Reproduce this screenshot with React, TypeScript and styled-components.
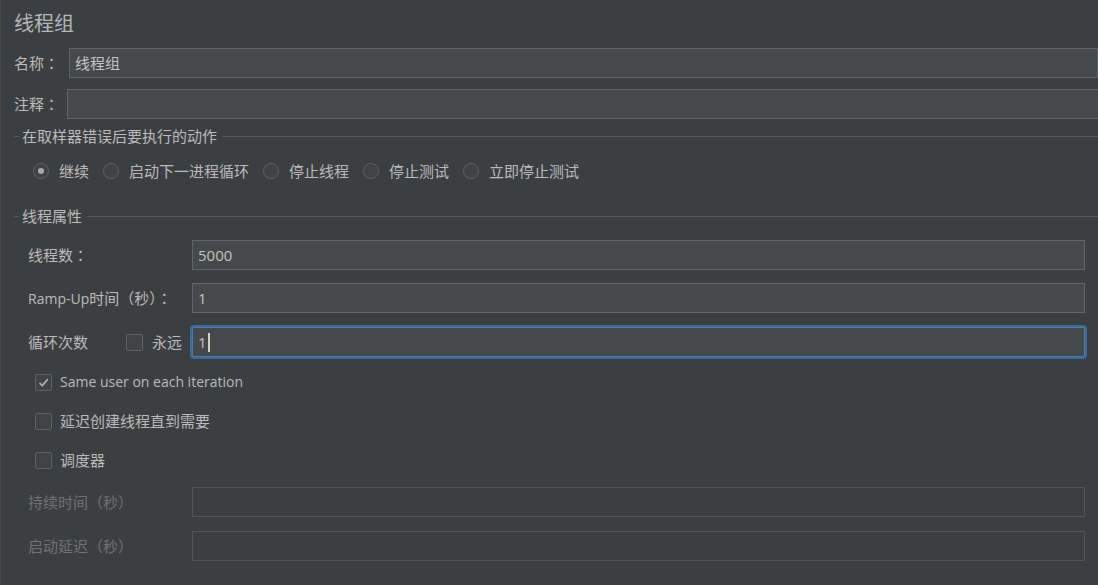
import styled, { createGlobalStyle } from 'styled-components'

const C = {
  bg: '#3c3f41',
  field: '#45494a',
  border: '#646464',
  text: '#bbbbbb',
  dim: '#6f7274',
  line: '#555859',
  off: '#525557',
  focus: '#3d6b99',
}

const GlobalStyle = createGlobalStyle`
  html, body {
    margin: 0;
    padding: 0;
    background: ${C.bg};
  }
  body {
    font-family: "Open Sans", "Noto Sans CJK SC", sans-serif;
    font-size: 15px;
    line-height: 20px;
    color: ${C.text};
  }
`

const St = {
  Panel: styled.div`
    width: 1098px;
    height: 585px;
    overflow: hidden;
    background: ${C.bg};
    box-shadow: inset 1px 0 0 #4a4d4f;
  `,
  Title: styled.div`
    height: 48px;
    display: flex;
    align-items: center;
    padding-left: 14px;
    font-size: 20px;
    color: #b4b8bb;
  `,
  TopRow: styled.div<{ top: number }>`
    display: flex;
    align-items: center;
    height: 30px;
    padding-left: 14px;
    margin-top: ${({ top }) => top}px;
  `,
  TopLabel: styled.div<{ w: number }>`
    width: ${({ w }) => w}px;
    flex: none;
    white-space: nowrap;
  `,
  // full-width colon centred in its em box, as the reference draws it
  Colon: styled.span`
    font-family: "Noto Sans CJK TC", "Noto Sans CJK SC", sans-serif;
  `,
  Latin: styled.span`
    font-size: 14px;
  `,
  Field: styled.div<{ over?: number; disabled?: boolean }>`
    flex: 1;
    height: 30px;
    box-sizing: border-box;
    display: flex;
    align-items: center;
    padding: 0 5px;
    background: ${({ disabled }) => (disabled ? 'transparent' : C.field)};
    border: 1px solid ${({ disabled }) => (disabled ? C.off : C.border)};
    margin-right: ${({ over }) => (over !== undefined ? -over : 13)}px;
    color: #c3c3c3;
  `,
  FocusField: styled.div`
    flex: 1;
    height: 30px;
    box-sizing: border-box;
    display: flex;
    align-items: center;
    padding: 0 5px;
    background: ${C.field};
    border: 1px solid #4a7bad;
    border-radius: 2px;
    box-shadow: 0 0 0 2px ${C.focus};
    margin-right: 13px;
    color: #c3c3c3;
  `,
  Caret: styled.span`
    display: inline-block;
    width: 2px;
    height: 19px;
    margin-left: 1px;
    background: #d0d0d0;
  `,
  Legend: styled.div<{ top: number }>`
    display: flex;
    align-items: center;
    height: 20px;
    padding-left: 14px;
    margin-top: ${({ top }) => top}px;
  `,
  Dash: styled.div`
    width: 5px;
    height: 1px;
    background: ${C.line};
  `,
  LegendText: styled.span`
    margin: 0 5px 0 3px;
    white-space: nowrap;
  `,
  Rule: styled.div`
    flex: 1;
    height: 1px;
    background: ${C.line};
  `,
  RadioRow: styled.div`
    display: flex;
    align-items: center;
    gap: 14px;
    height: 20px;
    padding-left: 33px;
    margin-top: 15px;
  `,
  Option: styled.label`
    display: flex;
    align-items: center;
    gap: 10px;
    white-space: nowrap;
  `,
  Radio: styled.span<{ checked?: boolean }>`
    width: 16px;
    height: 16px;
    box-sizing: border-box;
    border-radius: 50%;
    border: 1px solid #5f6264;
    background: #404345;
    display: flex;
    align-items: center;
    justify-content: center;
    &::after {
      content: '';
      width: 6px;
      height: 6px;
      border-radius: 50%;
      background: ${({ checked }) => (checked ? '#a8a8a8' : 'transparent')};
    }
  `,
  FormRow: styled.div<{ top: number }>`
    display: flex;
    align-items: center;
    height: 30px;
    padding-left: 28px;
    margin-top: ${({ top }) => top}px;
  `,
  FormLabel: styled.div<{ disabled?: boolean; w?: number }>`
    width: ${({ w }) => w ?? 164}px;
    flex: none;
    white-space: nowrap;
    color: ${({ disabled }) => (disabled ? C.dim : C.text)};
  `,
  Box: styled.span`
    width: 17px;
    height: 17px;
    flex: none;
    box-sizing: border-box;
    border: 1px solid #5f6264;
    border-radius: 2px;
    background: #404345;
    display: flex;
    align-items: center;
    justify-content: center;
  `,
  Forever: styled.label`
    display: flex;
    align-items: center;
    gap: 9px;
    width: 66px;
    flex: none;
    white-space: nowrap;
  `,
  CheckRow: styled.label<{ top: number }>`
    display: flex;
    align-items: center;
    gap: 8px;
    height: 20px;
    padding-left: 35px;
    margin-top: ${({ top }) => top}px;
    white-space: nowrap;
  `,
}

const Check = ({ on }: { on?: boolean }) => (
  <St.Box>
    {on && (
      <svg width="13" height="13" viewBox="0 0 13 13">
        <path d="M2.5 6.8 L5.3 9.6 L10.8 3.2" fill="none" stroke="#a9a9a9" strokeWidth="1.8" />
      </svg>
    )}
  </St.Box>
)

const actions = ['继续', '启动下一进程循环', '停止线程', '停止测试', '立即停止测试']

const App = () => {
  return (
    <St.Panel>
      <GlobalStyle />
      <St.Title>线程组</St.Title>
      <St.TopRow top={0}>
        <St.TopLabel w={55}>
          名称<St.Colon>：</St.Colon>
        </St.TopLabel>
        <St.Field over={0}>线程组</St.Field>
      </St.TopRow>
      <St.TopRow top={11}>
        <St.TopLabel w={53}>
          注释<St.Colon>：</St.Colon>
        </St.TopLabel>
        <St.Field over={4} />
      </St.TopRow>

      <St.Legend top={7}>
        <St.Dash />
        <St.LegendText>在取样器错误后要执行的动作</St.LegendText>
        <St.Rule />
      </St.Legend>
      <St.RadioRow>
        {actions.map((a, i) => (
          <St.Option key={a}>
            <St.Radio checked={i === 0} />
            {a}
          </St.Option>
        ))}
      </St.RadioRow>

      <St.Legend top={25}>
        <St.Dash />
        <St.LegendText>线程属性</St.LegendText>
        <St.Rule />
      </St.Legend>
      <St.FormRow top={14}>
        <St.FormLabel>
          线程数<St.Colon>：</St.Colon>
        </St.FormLabel>
        <St.Field>5000</St.Field>
      </St.FormRow>
      <St.FormRow top={13}>
        <St.FormLabel>
          <St.Latin>Ramp-Up</St.Latin>时间（秒）<St.Colon>：</St.Colon>
        </St.FormLabel>
        <St.Field>1</St.Field>
      </St.FormRow>
      <St.FormRow top={14}>
        <St.FormLabel w={98}>循环次数</St.FormLabel>
        <St.Forever>
          <Check />
          永远
        </St.Forever>
        <St.FocusField>
          1<St.Caret />
        </St.FocusField>
      </St.FormRow>

      <St.CheckRow top={15}>
        <Check on />
        <St.Latin>Same user on each iteration</St.Latin>
      </St.CheckRow>
      <St.CheckRow top={19}>
        <Check />
        延迟创建线程直到需要
      </St.CheckRow>
      <St.CheckRow top={19}>
        <Check />
        调度器
      </St.CheckRow>

      <St.FormRow top={17}>
        <St.FormLabel disabled>持续时间（秒）</St.FormLabel>
        <St.Field disabled />
      </St.FormRow>
      <St.FormRow top={14}>
        <St.FormLabel disabled>启动延迟（秒）</St.FormLabel>
        <St.Field disabled />
      </St.FormRow>
    </St.Panel>
  )
}

export default App
